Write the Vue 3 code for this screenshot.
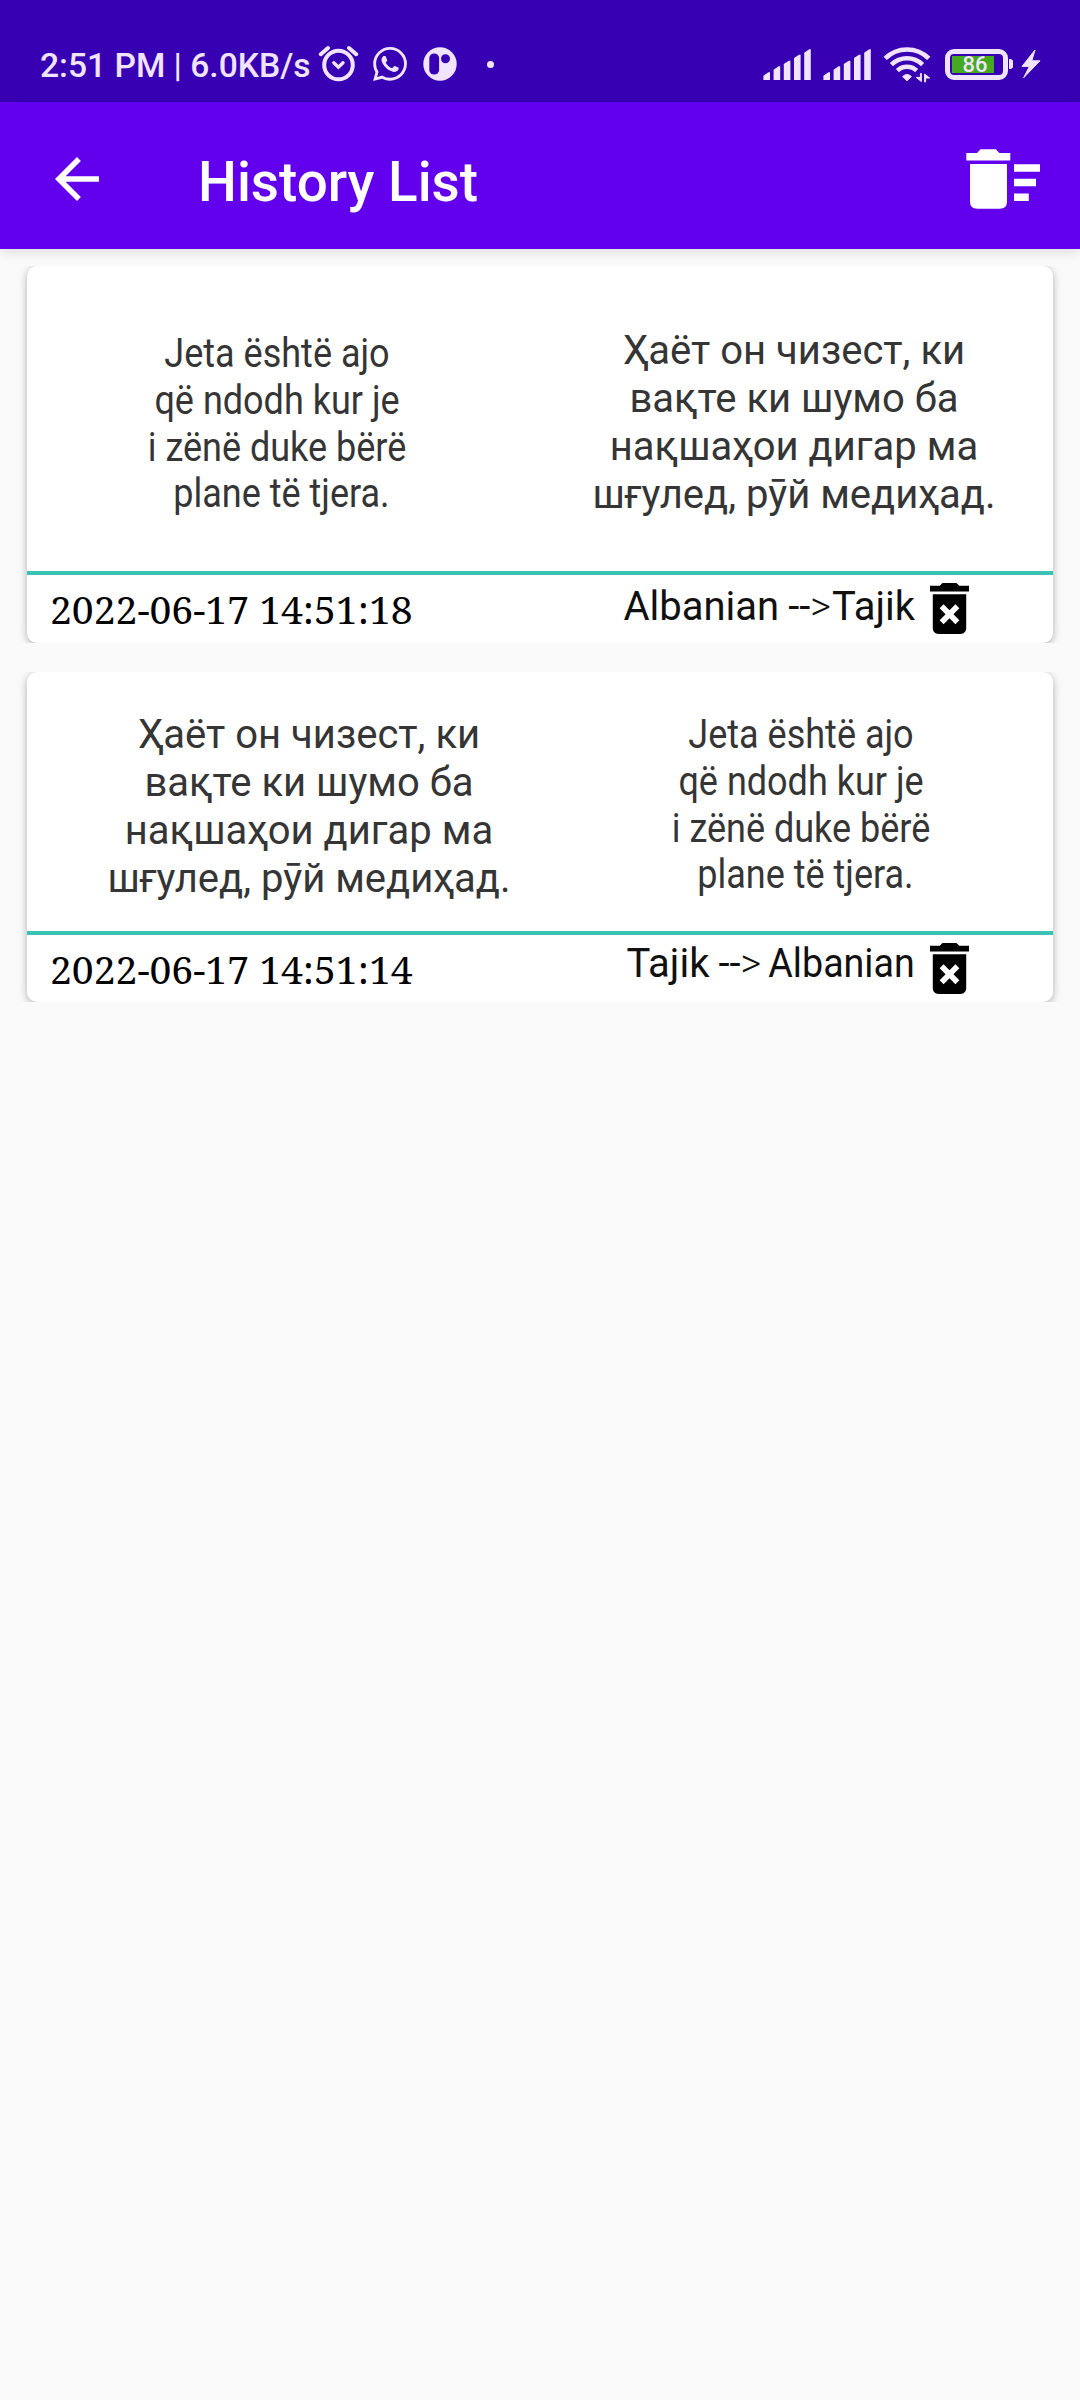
<template>
  <div class="screen">
    <div class="status-bar">
      <span class="clock">2:51 PM | 6.0KB/s</span>
      <svg class="ic alarm" width="42" height="42" viewBox="0 0 42 42" fill="none" stroke="currentColor" stroke-linecap="round">
        <circle cx="20.5" cy="21" r="14.3" stroke-width="4" />
        <path d="M2.8 10.2L10 4M31 4l7.2 6.2" stroke-width="4" />
        <path d="M15.8 18.8l4.6 4.4 4.6-4.4" stroke-width="3.4" />
      </svg>
      <svg class="ic whatsapp" width="34" height="34" viewBox="0 0 24 24" fill="currentColor">
        <path d="M17.472 14.382c-.297-.149-1.758-.867-2.03-.967-.273-.099-.471-.148-.67.15-.197.297-.767.966-.94 1.164-.173.199-.347.223-.644.075-.297-.15-1.255-.463-2.39-1.475-.883-.788-1.48-1.761-1.653-2.059-.173-.297-.018-.458.13-.606.134-.133.298-.347.446-.52.149-.174.198-.298.298-.497.099-.198.05-.371-.025-.52-.075-.149-.669-1.612-.916-2.207-.242-.579-.487-.5-.669-.51-.173-.008-.371-.01-.57-.01-.198 0-.52.074-.792.372-.272.297-1.04 1.016-1.04 2.479 0 1.462 1.065 2.875 1.213 3.074.149.198 2.096 3.2 5.077 4.487.709.306 1.262.489 1.694.625.712.227 1.36.195 1.871.118.571-.085 1.758-.719 2.006-1.413.248-.694.248-1.289.173-1.413-.074-.124-.272-.198-.57-.347m-5.421 7.403h-.004a9.87 9.87 0 01-5.031-1.378l-.361-.214-3.741.982.998-3.648-.235-.374a9.86 9.86 0 01-1.51-5.26c.001-5.45 4.436-9.884 9.888-9.884 2.64 0 5.122 1.03 6.988 2.898a9.825 9.825 0 012.893 6.994c-.003 5.45-4.437 9.884-9.885 9.884m8.413-18.297A11.815 11.815 0 0012.05 0C5.495 0 .16 5.335.157 11.892c0 2.096.547 4.142 1.588 5.945L.057 24l6.305-1.654a11.882 11.882 0 005.683 1.448h.005c6.554 0 11.89-5.335 11.893-11.893a11.821 11.821 0 00-3.48-8.413z" />
      </svg>
      <svg class="ic app" width="34" height="34" viewBox="0 0 34 34">
        <circle cx="17" cy="17" r="16.7" fill="currentColor" />
        <rect class="hole" x="6.3" y="6.4" width="9.8" height="21.2" rx="4.9" />
        <circle class="hole" cx="22.5" cy="11.8" r="4.5" />
      </svg>
      <span class="dot"></span>
      <span class="spacer"></span>
      <svg v-for="n in 2" :key="n" class="ic signal" width="50" height="42" viewBox="0 0 50 42" fill="currentColor">
        <path v-for="bar in signalBars" :key="bar" :d="bar" />
      </svg>
      <svg class="ic wifi" width="50" height="42" viewBox="0 0 50 42" fill="none" stroke="currentColor">
        <path d="M3.2 14.4A31 31 0 0 1 46.8 14.4" stroke-width="4.6" />
        <path d="M9.4 20.6A22.5 22.5 0 0 1 40.6 20.6" stroke-width="4.6" />
        <path d="M15.4 26.6A14 14 0 0 1 34.6 26.6" stroke-width="4.6" />
        <path d="M20.6 32.6Q25 28.4 29.4 32.6L25 36.8Z" fill="currentColor" stroke-width="1" stroke-linejoin="round" />
        <path d="M39.4 29.5V37.6L34.2 33.4H38.4V29.5ZM42.6 38V30L47.6 34H43.6V38Z" fill="currentColor" stroke-width="1" />
      </svg>
      <span class="battery">
        <span class="level"></span>
        <span class="percent">86</span>
      </span>
      <span class="nub"></span>
      <svg class="ic bolt" width="20" height="30" viewBox="0 0 20 30" fill="currentColor" stroke="currentColor" stroke-linejoin="round">
        <path d="M14 1L1 17.4H8.4L2.6 28.8 19 11.8H10.8Z" />
      </svg>
    </div>

    <header class="app-bar">
      <svg class="back" width="66" height="66" viewBox="0 0 24 24" fill="#fff">
        <path d="M20 11H7.83l5.59-5.59L12 4l-8 8 8 8 1.41-1.41L7.83 13H20v-2z" />
      </svg>
      <h1 class="title">History List</h1>
      <svg class="clear-all" width="75" height="60" viewBox="0 0 75 60" fill="#fff">
        <path d="M.3 4H11L14.6.3H29.8L33.4 4H44.3V11.6H.3ZM4 15H41V52.4Q41 59.7 33.7 59.7H11.3Q4 59.7 4 52.4Z" />
        <path d="M48 15.2H74V22.7H48ZM48 29.8H70V37.3H48ZM48 44.4H62.8V51.9H48Z" />
      </svg>
    </header>

    <main class="list">
      <article v-for="item in history" :key="item.date" class="card" :class="item.id">
        <div class="texts">
          <div class="text source" :class="item.source.lang">
            <div v-for="line in item.source.lines" :key="line" class="line">{{ line }}</div>
          </div>
          <div class="text target" :class="item.target.lang">
            <div v-for="line in item.target.lines" :key="line" class="line">{{ line }}</div>
          </div>
        </div>
        <div class="footer">
          <span class="date">{{ item.date }}</span>
          <span class="direction">
            <span class="from">{{ item.from }}</span>
            <span class="arrow">--<span class="head">&gt;</span></span>
            <span class="to">{{ item.to }}</span>
          </span>
          <svg class="delete" width="39" height="51" viewBox="5 3 14 18" preserveAspectRatio="none">
            <path d="M6 19c0 1.1.9 2 2 2h8c1.1 0 2-.9 2-2V7H6v12zm2.46-7.12l1.41-1.41L12 12.59l2.12-2.12 1.41 1.41L13.41 14l2.12 2.12-1.41 1.41L12 15.41l-2.12 2.12-1.41-1.41L10.59 14l-2.13-2.12zM15.5 4l-1-1h-5l-1 1H5v2h14V4z" />
          </svg>
        </div>
      </article>
    </main>
  </div>
</template>

<script setup>
// the last Albanian line starts with a non-breaking space
const albanian = {
  lang: 'sq',
  lines: ['Jeta është ajo', 'që ndodh kur je', 'i zënë duke bërë', '\u00a0plane të tjera.'],
};
const tajik = {
  lang: 'tg',
  lines: ['Ҳаёт он чизест, ки', 'вақте ки шумо ба', 'нақшаҳои дигар ма', 'шғулед, рӯй медиҳад.'],
};

const history = [
  { id: 'first', date: '2022-06-17 14:51:18', from: 'Albanian', to: 'Tajik', source: albanian, target: tajik },
  { id: 'second', date: '2022-06-17 14:51:14', from: 'Tajik', to: 'Albanian', source: tajik, target: albanian },
];

// bars grow to the right, each with a slanted top
const signalBars = [28.3, 22.3, 16.7, 10.7, 5.3].map((top, i) => {
  const x = 1.4 + i * 10.2;
  return `M${x} ${top + 3.4}L${x + 5} ${top}H${x + 6.6}V36H${x}Z`;
});
</script>

<style>
body {
  background: #fafafa;
}
</style>

<style scoped>
.screen {
  width: 1080px;
  min-height: 2400px;
  background: #fafafa;
  font-family: Roboto, sans-serif;
}

/* ===== status bar ===== */
.status-bar {
  box-sizing: border-box;
  display: flex;
  align-items: center;
  height: 102px;
  padding: 28px 39px 0 40px;
  background: #3700b3;
  color: #f0e4ff;
}

.ic {
  flex: none;
}

.clock {
  width: 278px;
  font-size: 33.6px;
  line-height: 39px;
  font-weight: 500;
  white-space: nowrap;
}

.whatsapp {
  margin: 0 0 2px 13px;
}

.app {
  margin: 0 0 2px 16px;
}

.hole {
  fill: #3700b3;
}

.dot {
  width: 7px;
  height: 7px;
  margin: 0 0 2px 29.5px;
  border-radius: 50%;
  background: currentColor;
}

.spacer {
  flex: 1;
}

.signal {
  margin-right: 10px;
}

.battery {
  position: relative;
  flex: none;
  box-sizing: border-box;
  width: 63px;
  height: 31px;
  margin: 0 0 2px 13px;
  border: 5px solid currentColor;
  border-radius: 9px;
}

.level {
  position: absolute;
  left: 2px;
  top: 2px;
  width: 42px;
  height: 17px;
  background: #43a91f;
}

.percent {
  position: absolute;
  left: 13px;
  top: -2px;
  font-size: 22px;
  line-height: 26px;
  font-weight: 500;
}

.nub {
  width: 4px;
  height: 10px;
  margin: 0 0 2px 1.5px;
  border-radius: 0 3px 3px 0;
  background: currentColor;
}

.bolt {
  margin: 0 0 2px 8px;
}

/* ===== app bar ===== */
.app-bar {
  box-sizing: border-box;
  display: flex;
  align-items: flex-start;
  height: 147px;
  padding: 44px 39px 0 44px;
  background: #6200ee;
  box-shadow: 0 3px 12px rgba(0, 0, 0, 0.12);
}

.title {
  flex: 1;
  margin: 4px 0 0 88px;
  color: #fff;
  font-size: 54.8px;
  line-height: 64px;
  font-weight: 500;
}

.clear-all {
  margin-top: 3px;
}

/* ===== history ===== */
.list {
  display: flex;
  flex-direction: column;
  gap: 29px;
  padding: 17px 27px 0;
}

/* the shadow shows at the sides only, each row clips it above and below */
.card {
  border-radius: 10px;
  background: #fff;
  box-shadow: 0 2px 9px rgba(0, 0, 0, 0.3);
  clip-path: inset(0 -9px);
}

.texts {
  display: flex;
  box-sizing: border-box;
  border-bottom: 4px solid #38c2b2;
}

.text {
  box-sizing: border-box;
  color: #353535;
  font-size: 40px;
  text-align: center;
  white-space: nowrap;
}

.source {
  flex: none;
}

.target {
  flex: 1;
}

.sq {
  line-height: 46.8px;
}

/* Albanian is set narrower than Tajik */
.sq .line {
  transform: scaleX(0.9);
}

.tg {
  line-height: 48px;
}

.first .texts {
  height: 309px;
}

.first .source {
  width: 500px;
  padding-top: 65px;
}

.first .target {
  padding: 61px 0 0 8px;
}

.second .texts {
  height: 263px;
}

.second .source {
  width: 564px;
  padding-top: 39px;
}

.second .target {
  padding: 40px 42px 0 0;
}

.footer {
  display: flex;
  align-items: flex-start;
  box-sizing: border-box;
  height: 68px;
  padding: 7px 84px 0 23px;
  color: #000;
}

.second .footer {
  height: 67px;
}

.date {
  font-family: "Noto Serif", "Liberation Serif", serif;
  font-size: 39.1px;
  line-height: 54px;
  white-space: nowrap;
}

.direction {
  display: flex;
  margin: 1px 0 0 auto;
  color: #111;
  font-size: 40px;
  line-height: 47px;
}

.second .direction {
  margin-top: -2px;
}

.from {
  margin-right: 9px;
}

.arrow {
  margin-right: 1px;
}

.head {
  font-weight: 300;
}

.second .to {
  margin-left: -3px;
  transform: scaleX(0.94);
  transform-origin: right;
}

.delete {
  flex: none;
  margin: 1px 0 0 15px;
}
</style>
